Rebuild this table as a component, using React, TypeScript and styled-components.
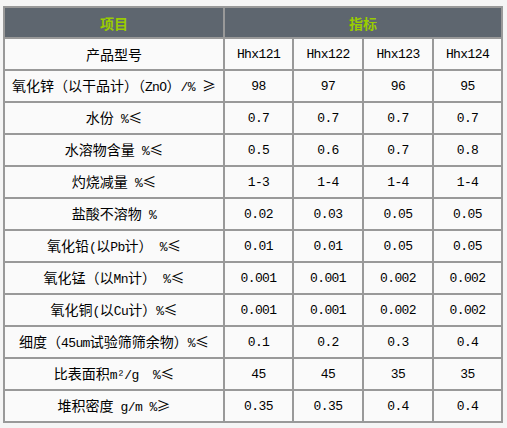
import React from 'react';
import styled, { createGlobalStyle } from 'styled-components';

interface SpecRow {
  label: string;
  values: string[];
}

const rows: SpecRow[] = [
  { label: '产品型号', values: ['Hhx121', 'Hhx122', 'Hhx123', 'Hhx124'] },
  { label: '氧化锌（以干品计）（ZnO）/% ≥', values: ['98', '97', '96', '95'] },
  { label: '水份 %≤', values: ['0.7', '0.7', '0.7', '0.7'] },
  { label: '水溶物含量 %≤', values: ['0.5', '0.6', '0.7', '0.8'] },
  { label: '灼烧减量 %≤', values: ['1-3', '1-4', '1-4', '1-4'] },
  { label: '盐酸不溶物 %', values: ['0.02', '0.03', '0.05', '0.05'] },
  { label: '氧化铅(以Pb计） %≤', values: ['0.01', '0.01', '0.05', '0.05'] },
  { label: '氧化锰（以Mn计） %≤', values: ['0.001', '0.001', '0.002', '0.002'] },
  { label: '氧化铜(以Cu计）%≤', values: ['0.001', '0.001', '0.002', '0.002'] },
  { label: '细度（45um试验筛筛余物）%≤', values: ['0.1', '0.2', '0.3', '0.4'] },
  { label: '比表面积m²/g  %≤', values: ['45', '45', '35', '35'] },
  { label: '堆积密度 g/m %≥', values: ['0.35', '0.35', '0.4', '0.4'] },
];

const colWidths = [218, 67, 68, 68, 67];

// split a label into runs so latin text gets the narrow mono face
const renderLabel = (label: string) => {
  const parts = label.split(/([\x20-\x7e²]+)/).filter((p) => p !== '');
  return parts.map((part, i) =>
    /^[\x20-\x7e²]+$/.test(part) ? <Latin key={i}>{part}</Latin> : <span key={i}>{part}</span>
  );
};

const App: React.FC = () => {
  return (
    <>
      <GlobalStyle />
      <Page>
        <SpecTable>
          <colgroup>
            {colWidths.map((w, i) => (
              <col key={i} style={{ width: w }} />
            ))}
          </colgroup>
          <thead>
            <tr>
              <HeadCell>项目</HeadCell>
              <HeadCell colSpan={4}>指标</HeadCell>
            </tr>
          </thead>
          <tbody>
            {rows.map((row) => (
              <tr key={row.label}>
                <LabelCell>{renderLabel(row.label)}</LabelCell>
                {row.values.map((v, i) => (
                  <ValueCell key={i}>{v}</ValueCell>
                ))}
              </tr>
            ))}
          </tbody>
        </SpecTable>
      </Page>
    </>
  );
};

const GlobalStyle = createGlobalStyle`
  html, body {
    margin: 0;
    padding: 0;
    background-color: #f5f5f5;
  }
`;

const Page = styled.div`
  padding: 6px 0 0 3px;
`;

const SpecTable = styled.table`
  width: 500px;
  table-layout: fixed;
  border-collapse: separate;
  border-spacing: 2px;
  background-color: #999999;
  font-family: "Noto Sans CJK SC", sans-serif;
  font-size: 14px;
  color: #000;
`;

const HeadCell = styled.th`
  height: 29px;
  padding: 0;
  background-color: #5e666f;
  color: #99cc00;
  font-weight: bold;
  font-size: 14px;
  text-align: center;
  vertical-align: middle;
`;

const LabelCell = styled.td`
  height: 30px;
  padding: 0;
  background-color: #fafafa;
  text-align: center;
  vertical-align: middle;
  white-space: pre;
  line-height: 16px;
`;

const Latin = styled.span`
  font-family: "Liberation Mono", "Courier New", monospace;
  font-size: 13px;
  letter-spacing: -0.6px;
`;

const ValueCell = styled.td`
  height: 30px;
  padding: 0;
  background-color: #fafafa;
  text-align: center;
  vertical-align: middle;
  font-family: "Liberation Mono", "Courier New", monospace;
  font-size: 13px;
  letter-spacing: -0.6px;
`;

export default App;
